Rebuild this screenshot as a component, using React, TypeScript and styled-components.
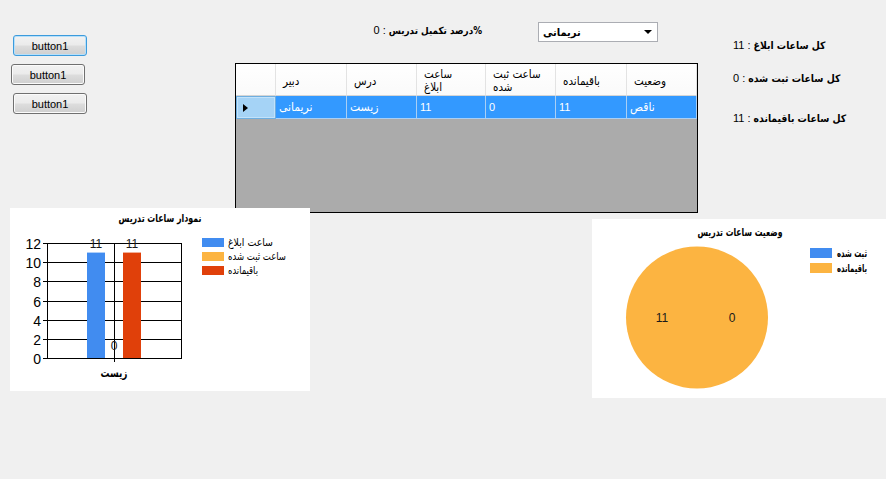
import React from "react";
import styled, { createGlobalStyle } from "styled-components";

const UI = `"Liberation Sans", "DejaVu Sans", sans-serif`;
const FA = `"DejaVu Sans Condensed", "DejaVu Sans", "Liberation Sans", sans-serif`;

const palette = {
  blue: "#418cf0",
  orange: "#fcb441",
  red: "#e0400a",
};

const Global = createGlobalStyle`
  html, body { margin: 0; padding: 0; background: #f0f0f0; }
  body { font-family: ${UI}; font-size: 11px; color: #000; }
  #root { width: 886px; height: 479px; overflow: hidden; }
`;

const Form = styled.div`
  width: 886px;
  height: 479px;
  background: #f0f0f0;
  display: flex;
  flex-direction: column;
`;

const TopArea = styled.div`
  display: flex;
  height: 213px;
`;

/* ---------- left buttons ---------- */

const ButtonStack = styled.div`
  width: 235px;
  display: flex;
  flex-direction: column;
  align-items: flex-start;
  gap: 8px;
  padding-top: 35px;
  box-sizing: border-box;
`;

const Button = styled.button<{ $x: number; $focused?: boolean }>`
  margin-left: ${(p) => p.$x}px;
  width: 74px;
  height: 21px;
  padding: 0;
  font: 11px ${UI};
  color: #000;
  border: 1px solid ${(p) => (p.$focused ? "#3c9bdc" : "#707070")};
  border-radius: 3px;
  background: linear-gradient(#f2f2f2 0%, #ebebeb 48%, #dddddd 52%, #cfcfcf 100%);
  box-shadow: inset 0 0 0 1px ${(p) => (p.$focused ? "#b7e0fa" : "#fbfbfb")};
`;

/* ---------- center: filter + data grid ---------- */

const Center = styled.div`
  width: 463px;
  display: flex;
  flex-direction: column;
`;

const FilterRow = styled.div`
  display: flex;
  align-items: flex-start;
  margin-top: 22px;
  height: 20px;
`;

const Percent = styled.div`
  width: 247px;
  margin-top: 2px;
  line-height: 13px;
  text-align: right;
  font-family: ${UI};
  font-size: 11px;
  white-space: nowrap;
`;

const FaBold = styled.span<{ $size?: number }>`
  font-family: ${FA};
  font-weight: bold;
  font-size: ${(p) => p.$size ?? 10.3}px;
`;

const Combo = styled.div`
  margin-left: 56px;
  width: 120px;
  height: 20px;
  box-sizing: border-box;
  border: 1px solid #abadb3;
  background: #fff;
  display: flex;
  align-items: center;
  justify-content: space-between;
  padding: 0 5px 0 4px;
  font-family: ${FA};
  font-weight: bold;
  font-size: 11px;
`;

const ComboArrow = styled.span`
  width: 0;
  height: 0;
  border-left: 4px solid transparent;
  border-right: 4px solid transparent;
  border-top: 4px solid #000;
`;

const Grid = styled.div`
  margin-top: 21px;
  height: 150px;
  box-sizing: border-box;
  border: 1px solid #000;
  background: #ababab;
  overflow: hidden;
`;

const GridRow = styled.div`
  display: grid;
  grid-template-columns: 40px 71px 70px 69px 70px 71px 70px;
`;

const HeaderCell = styled.div`
  height: 32px;
  box-sizing: border-box;
  background: linear-gradient(#ffffff, #fafafa);
  border-right: 1px solid #e3e3e3;
  border-bottom: 1px solid #d5d5d5;
  padding: 3px 0 0 7px;
  display: flex;
  align-items: center;
  font-family: ${FA};
  font-size: 11.5px;
  line-height: 13px;
  white-space: nowrap;
`;

const Cell = styled.div<{ $fa?: boolean }>`
  height: 23px;
  box-sizing: border-box;
  background: #3399ff;
  color: #fff;
  border-right: 1px solid #a9cff5;
  border-bottom: 1px solid #a9cff5;
  padding-left: 3px;
  display: flex;
  align-items: center;
  font-family: ${(p) => (p.$fa ? FA : UI)};
  font-size: ${(p) => (p.$fa ? 12 : 11)}px;
`;

const RowHeader = styled.div`
  height: 23px;
  box-sizing: border-box;
  background: #a5d3f6;
  border: 1px solid #6eaee0;
  box-shadow: inset 0 0 0 1px #c2e2fa;
  display: flex;
  align-items: center;
  padding-left: 6px;
`;

const RowMarker = styled.span`
  width: 0;
  height: 0;
  border-top: 4px solid transparent;
  border-bottom: 4px solid transparent;
  border-left: 5px solid #000;
`;

/* ---------- right summary labels ---------- */

const Summary = styled.div`
  margin-left: 35px;
  display: flex;
  flex-direction: column;
  align-items: flex-start;
  padding-top: 39px;
`;

const SummaryLine = styled.div<{ $mt: number }>`
  margin-top: ${(p) => p.$mt}px;
  line-height: 13px;
  font-family: ${UI};
  font-size: 11px;
  white-space: nowrap;
`;

/* ---------- charts ---------- */

const BottomArea = styled.div`
  display: flex;
  align-items: flex-start;
`;

const BarPanel = styled.div`
  position: relative;
  z-index: 1;
  margin-left: 10px;
  margin-top: -5px;
  width: 300px;
  height: 183px;
  background: #fff;
`;

const PiePanel = styled.div`
  margin-left: 282px;
  margin-top: 6px;
  width: 294px;
  height: 179px;
  background: #fff;
`;

const ChartSvg = styled.svg`
  display: block;
`;

const faText = { fontFamily: FA };
const numText = { fontFamily: UI };

type FaLabelProps = {
  x: number;
  y: number;
  width: number;
  size: number;
  bold?: boolean;
  anchor?: "start" | "middle" | "end";
  children: string;
};

function FaLabel({ x, y, width, size, bold, anchor = "start", children }: FaLabelProps) {
  return (
    <text
      x={x}
      y={y}
      textAnchor={anchor}
      fontSize={size}
      fontWeight={bold ? "bold" : "normal"}
      textLength={width}
      lengthAdjust="spacingAndGlyphs"
      style={faText}
    >
      {children}
    </text>
  );
}

function BarChart() {
  const top = 35;
  const bottom = 150;
  const left = 37;
  const right = 171;
  const max = 12;
  const scale = (bottom - top) / max;
  const ticks = [0, 2, 4, 6, 8, 10, 12];
  const y = (v: number) => bottom - v * scale;
  const bars = [
    { x: 77, v: 11, color: palette.blue },
    { x: 95, v: 0, color: palette.orange },
    { x: 113, v: 11, color: palette.red },
  ];
  const legend = [
    { label: "ساعت ابلاغ", color: palette.blue, w: 45 },
    { label: "ساعت ثبت شده", color: palette.orange, w: 58 },
    { label: "باقیمانده", color: palette.red, w: 30 },
  ];
  return (
    <ChartSvg width={300} height={183} viewBox="0 0 300 183">
      <FaLabel x={150} y={14} width={83} size={11} bold anchor="middle">
        نمودار ساعات تدریس
      </FaLabel>
      {ticks.map((t) => {
        const yy = Math.round(y(t)) + 0.5;
        return (
          <g key={t}>
            <line x1={33} x2={right} y1={yy} y2={yy} stroke="#000" strokeWidth={1} />
            <text x={31} y={yy + 5} textAnchor="end" fontSize={14} fill="#000" style={numText}>
              {t}
            </text>
          </g>
        );
      })}
      <line x1={left + 0.5} x2={left + 0.5} y1={top} y2={bottom + 1} stroke="#000" />
      <line x1={right + 0.5} x2={right + 0.5} y1={top} y2={bottom + 1} stroke="#000" />
      <line x1={104.5} x2={104.5} y1={top} y2={bottom + 4} stroke="#000" />
      {bars.map((b) =>
        b.v > 0 ? (
          <rect key={b.x} x={b.x} y={y(b.v)} width={18} height={bottom - y(b.v)} fill={b.color} />
        ) : null
      )}
      {bars.map((b) => (
        <text
          key={`l${b.x}`}
          x={b.x + 9}
          y={b.v > 0 ? y(b.v) - 5 : bottom - 8}
          textAnchor="middle"
          fontSize={12}
          fill="#1a1a1a"
          style={numText}
        >
          {b.v}
        </text>
      ))}
      <FaLabel x={104} y={169} width={27} size={12} bold anchor="middle">
        زیست
      </FaLabel>
      {legend.map((l, i) => (
        <g key={l.label}>
          <rect x={192} y={30 + i * 14} width={22} height={9} fill={l.color} />
          <FaLabel x={218} y={38 + i * 14} width={l.w} size={11}>
            {l.label}
          </FaLabel>
        </g>
      ))}
    </ChartSvg>
  );
}

function PieChart() {
  const legend = [
    { label: "ثبت شده", color: palette.blue },
    { label: "باقیمانده", color: palette.orange },
  ];
  return (
    <ChartSvg width={294} height={179} viewBox="0 0 294 179">
      <FaLabel x={148} y={17} width={85} size={11} bold anchor="middle">
        وضعیت ساعات تدریس
      </FaLabel>
      <circle cx={105} cy={98.5} r={71} fill={palette.orange} />
      <text x={70} y={103} textAnchor="middle" fontSize={12} fill="#1a1a1a" style={numText}>
        11
      </text>
      <text x={140} y={103} textAnchor="middle" fontSize={12} fill="#1a1a1a" style={numText}>
        0
      </text>
      {legend.map((l, i) => (
        <g key={l.label}>
          <rect x={218} y={29 + i * 15} width={22} height={10} fill={l.color} />
          <FaLabel x={245} y={38 + i * 15} width={30} size={11} bold>
            {l.label}
          </FaLabel>
        </g>
      ))}
    </ChartSvg>
  );
}

const columns: React.ReactNode[] = [
  "دبیر",
  "درس",
  <>ساعت<br />ابلاغ</>,
  <>ساعت ثبت<br />شده</>,
  "باقیمانده",
  "وضعیت",
];

const row = [
  { v: "نریمانی", fa: true },
  { v: "زیست", fa: true },
  { v: "11" },
  { v: "0" },
  { v: "11" },
  { v: "ناقص", fa: true },
];

export default function App() {
  return (
    <>
      <Global />
      <Form>
        <TopArea>
          <ButtonStack>
            <Button $x={13} $focused>button1</Button>
            <Button $x={11}>button1</Button>
            <Button $x={13}>button1</Button>
          </ButtonStack>

          <Center>
            <FilterRow>
              <Percent dir="rtl">
                <FaBold $size={9.8}>%درصد تکمیل تدریس</FaBold> : 0
              </Percent>
              <Combo>
                <span>نریمانی</span>
                <ComboArrow />
              </Combo>
            </FilterRow>
            <Grid>
              <GridRow>
                <HeaderCell />
                {columns.map((c, i) => (
                  <HeaderCell key={i}>
                    <span>{c}</span>
                  </HeaderCell>
                ))}
              </GridRow>
              <GridRow>
                <RowHeader>
                  <RowMarker />
                </RowHeader>
                {row.map((c, i) => (
                  <Cell key={i} $fa={c.fa}>
                    {c.v}
                  </Cell>
                ))}
              </GridRow>
            </Grid>
          </Center>

          <Summary>
            <SummaryLine $mt={0} dir="rtl">
              <FaBold>کل ساعات ابلاغ</FaBold> : 11
            </SummaryLine>
            <SummaryLine $mt={20} dir="rtl">
              <FaBold>کل ساعات ثبت شده</FaBold> : 0
            </SummaryLine>
            <SummaryLine $mt={27} dir="rtl">
              <FaBold>کل ساعات باقیمانده</FaBold> : 11
            </SummaryLine>
          </Summary>
        </TopArea>

        <BottomArea>
          <BarPanel>
            <BarChart />
          </BarPanel>
          <PiePanel>
            <PieChart />
          </PiePanel>
        </BottomArea>
      </Form>
    </>
  );
}
